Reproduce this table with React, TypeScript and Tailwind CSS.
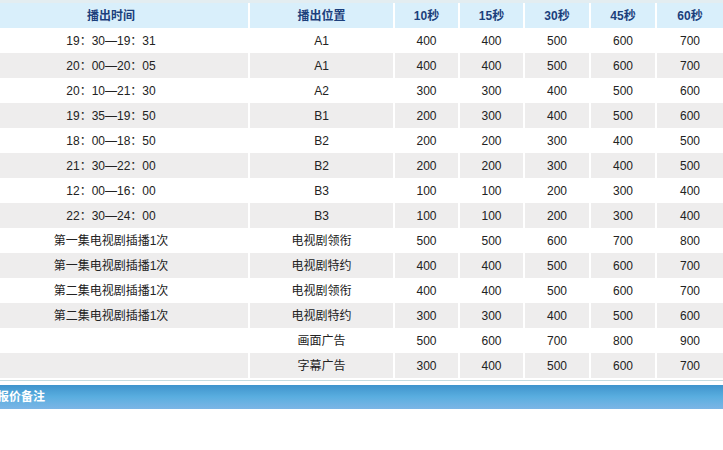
import React from 'react';

const rows: string[][] = [
  ['19：30—19：31', 'A1', '400', '400', '500', '600', '700'],
  ['20：00—20：05', 'A1', '400', '400', '500', '600', '700'],
  ['20：10—21：30', 'A2', '300', '300', '400', '500', '600'],
  ['19：35—19：50', 'B1', '200', '300', '400', '500', '600'],
  ['18：00—18：50', 'B2', '200', '200', '300', '400', '500'],
  ['21：30—22：00', 'B2', '200', '200', '300', '400', '500'],
  ['12：00—16：00', 'B3', '100', '100', '200', '300', '400'],
  ['22：30—24：00', 'B3', '100', '100', '200', '300', '400'],
  ['第一集电视剧插播1次', '电视剧领衔', '500', '500', '600', '700', '800'],
  ['第一集电视剧插播1次', '电视剧特约', '400', '400', '500', '600', '700'],
  ['第二集电视剧插播1次', '电视剧领衔', '400', '400', '500', '600', '700'],
  ['第二集电视剧插播1次', '电视剧特约', '300', '300', '400', '500', '600'],
  ['', '画面广告', '500', '600', '700', '800', '900'],
  ['', '字幕广告', '300', '400', '500', '600', '700'],
];

const headers = ['播出时间', '播出位置', '10秒', '15秒', '30秒', '45秒', '60秒'];

// fixed column widths, separated by 2px white gaps
const colW = ['w-[274px]', 'w-[143px]', 'w-[63px]', 'w-[63px]', 'w-[64px]', 'w-[64px]', 'w-[66px]'];

export default function App() {
  return (
    <div
      className="w-[723px] h-[450px] overflow-hidden bg-white text-[12px]"
      style={{ fontFamily: '"Liberation Sans", "Noto Sans CJK SC", sans-serif' }}
    >
      <div className="h-[3px] bg-[#e3edf1]" />
      <div className="-ml-[26px] w-[749px]">
        {/* header */}
        <div className="flex gap-x-[2px] h-[25px] bg-white">
          {headers.map((h, i) => (
            <div
              key={i}
              className={`${colW[i]} shrink-0 bg-[#d9effb] flex items-center justify-center font-bold text-[#1c3f7c]`}
            >
              {h}
            </div>
          ))}
        </div>
        {/* body */}
        {rows.map((r, ri) => (
          <div key={ri} className="flex gap-x-[2px] h-[25px] bg-white">
            {r.map((c, ci) => (
              <div
                key={ci}
                className={`${colW[ci]} shrink-0 flex items-center justify-center text-[#222] ${
                  ri % 2 === 1 ? 'bg-[#eeeded]' : 'bg-white'
                }`}
              >
                {c}
              </div>
            ))}
          </div>
        ))}
      </div>
      <div className="h-[2px]" />
      <div className="h-[1px] bg-[#c4dce0]" />
      <div className="h-[4px]" />
      <div className="h-[24px] bg-gradient-to-b from-[#3f94cc] via-[#5aaee0] to-[#7bb5e6] flex items-center -ml-[3px] font-bold text-white">
        报价备注
      </div>
    </div>
  );
}
